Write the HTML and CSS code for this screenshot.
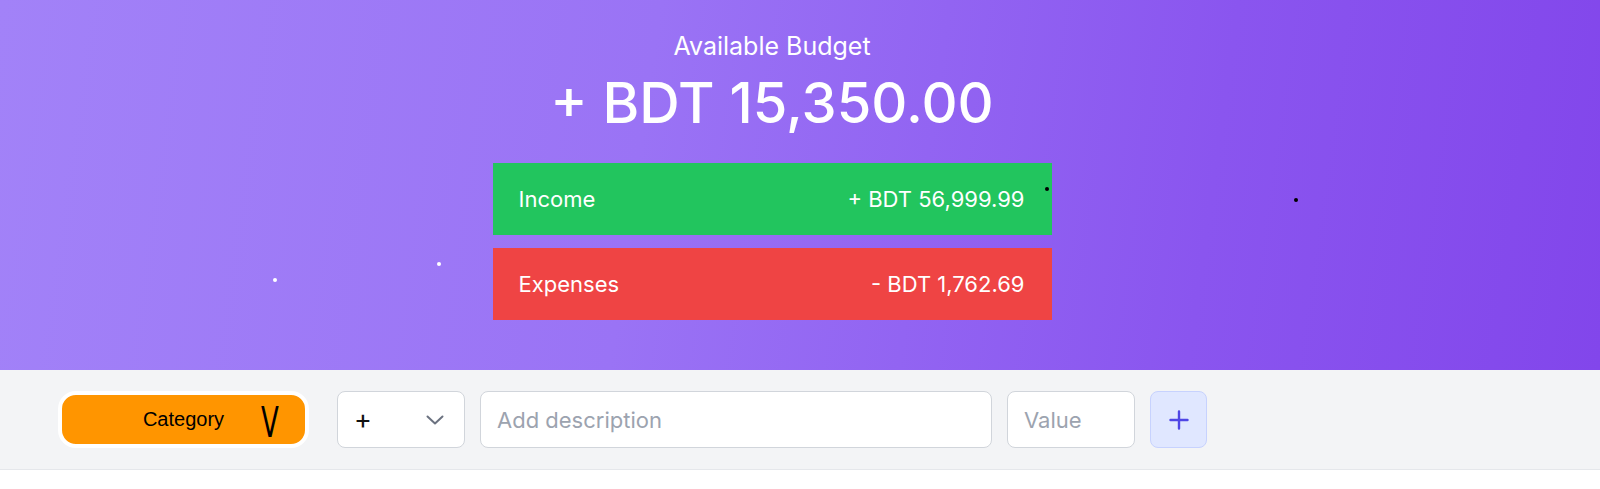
FILE: index.html
```html
<!DOCTYPE html>
<html lang="en">
<head>
<meta charset="utf-8">
<title>Budget</title>
<link rel="stylesheet" href="styles.css">
</head>
<body>
<header class="top">
  <div class="budget">
    <div class="budget-title">Available Budget</div>
    <div class="budget-value">+ BDT 15,350.00</div>
    <div class="row row-income">
      <span class="row-label">Income</span>
      <span class="row-value">+ BDT 56,999.99</span>
    </div>
    <div class="row row-expense">
      <span class="row-label">Expenses</span>
      <span class="row-value">- BDT 1,762.69</span>
    </div>
  </div>
  <span class="dot dot-w1"></span>
  <span class="dot dot-w2"></span>
  <span class="dot dot-b1"></span>
  <span class="dot dot-b2"></span>
</header>
<section class="add">
  <div class="add-row">
    <button class="category">Category<span class="category-v">V</span></button>
    <div class="type-select">
      <span class="type-sign">+</span>
      <svg class="chev" width="18" height="10" viewBox="0 0 18 10"><path d="M1.5 1.5 L9 8.5 L16.5 1.5" fill="none" stroke="#6b7280" stroke-width="2" stroke-linecap="round" stroke-linejoin="round"/></svg>
    </div>
    <input class="field field-desc" type="text" placeholder="Add description">
    <input class="field field-value" type="text" placeholder="Value">
    <button class="add-btn"><svg width="20" height="20" viewBox="0 0 20 20"><path d="M10 1.5 V18.5 M1.5 10 H18.5" stroke="#4f46e5" stroke-width="2.4" stroke-linecap="round"/></svg></button>
  </div>
</section>
</body>
</html>
```

FILE: styles.css
```css
* { box-sizing: border-box; }
html, body { margin: 0; padding: 0; background: #ffffff; }
body { font-family: Inter, "Noto Sans", sans-serif; }

.top {
  position: relative;
  height: 370px;
  padding: 30px 56px 0 0;
  background: linear-gradient(98deg, #a282f8 0%, #9a73f5 40%, #8a55ef 75%, #8246eb 100%);
  color: #ffffff;
}
.budget {
  display: flex;
  flex-direction: column;
  align-items: center;
}
.budget-title {
  font-size: 25px;
  line-height: 32px;
  font-weight: 400;
}
.budget-value {
  margin-top: 13px;
  font-size: 56px;
  line-height: 56px;
  font-weight: 500;
}
.row {
  width: 559px;
  height: 72px;
  padding: 0 27px 0 26px;
  display: flex;
  align-items: center;
  justify-content: space-between;
  font-size: 22px;
  line-height: 28px;
}
.row-income { margin-top: 32px; background: #22c55e; }
.row-expense { margin-top: 13px; background: #ef4444; }

.dot {
  position: absolute;
  width: 4px;
  height: 4px;
  border-radius: 50%;
}
.dot-w1 { left: 273px; top: 278px; background: #ffffff; }
.dot-w2 { left: 437px; top: 262px; background: #ffffff; }
.dot-b1 { left: 1294px; top: 198px; background: #000000; }
.dot-b2 { left: 1045px; top: 187px; background: #000000; }

.add {
  height: 100px;
  background: #f3f4f6;
  border-bottom: 1px solid #e5e7eb;
  padding: 21px 0 0 58px;
}
.add-row {
  display: flex;
  align-items: stretch;
  height: 57px;
}
.category {
  position: relative;
  width: 251px;
  height: 57px;
  margin: 0 28px 0 0;
  padding: 0;
  background: #ff9500;
  border: 4px solid #ffffff;
  border-radius: 18px;
  font-family: "Liberation Sans", Arial, sans-serif;
  font-size: 20px;
  color: #000000;
  text-align: center;
}
.category-v {
  position: absolute;
  left: 199px;
  top: 12px;
  font-family: "DejaVu Sans", sans-serif;
  font-style: normal;
  font-size: 42px;
  line-height: 32px;
  font-weight: 400;
  transform: scaleX(0.62);
  transform-origin: left top;
}
.type-select {
  width: 128px;
  margin-right: 15px;
  background: #ffffff;
  border: 1px solid #d1d5db;
  border-radius: 8px;
  display: flex;
  align-items: center;
  justify-content: space-between;
  padding: 0 20px 0 16px;
  font-size: 27px;
  color: #111111;
}
.type-sign { line-height: 1; }
.field {
  height: 57px;
  margin: 0 15px 0 0;
  padding: 0 16px;
  background: #ffffff;
  border: 1px solid #d1d5db;
  border-radius: 8px;
  font-family: Inter, "Noto Sans", sans-serif;
  font-size: 22px;
  color: #111827;
  outline: none;
}
.field::placeholder { color: #9ca3af; }
.field-desc { width: 512px; }
.field-value { width: 128px; }
.add-btn {
  width: 57px;
  height: 57px;
  padding: 0;
  background: #e0e7ff;
  border: 1px solid #c7d2fe;
  border-radius: 8px;
  display: flex;
  align-items: center;
  justify-content: center;
}
```
